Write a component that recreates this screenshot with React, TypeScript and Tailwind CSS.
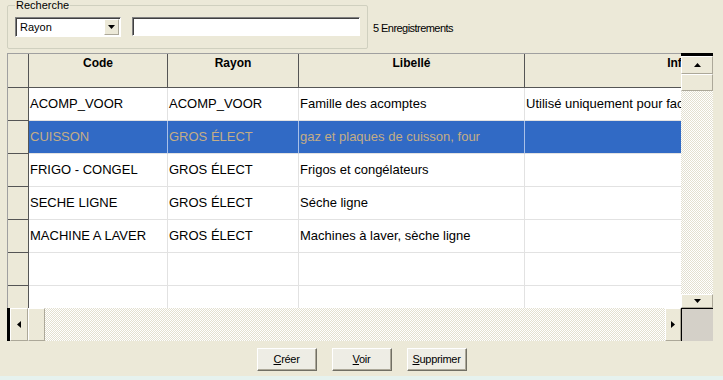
import React from 'react'

const rows = [
  { code: 'ACOMP_VOOR', rayon: 'ACOMP_VOOR', libelle: 'Famille des acomptes', info: 'Utilisé uniquement pour facturer les acomptes' },
  { code: 'CUISSON', rayon: 'GROS ÉLECT', libelle: 'gaz et plaques de cuisson, four', info: '', selected: true },
  { code: 'FRIGO - CONGEL', rayon: 'GROS ÉLECT', libelle: 'Frigos et congélateurs', info: '' },
  { code: 'SECHE LIGNE', rayon: 'GROS ÉLECT', libelle: 'Séche ligne', info: '' },
  { code: 'MACHINE A LAVER', rayon: 'GROS ÉLECT', libelle: 'Machines à laver, sèche ligne', info: '' },
  { code: '', rayon: '', libelle: '', info: '' },
  { code: '', rayon: '', libelle: '', info: '' },
]

const cols = [
  { label: 'Code', key: 'code', w: 'w-[139px]' },
  { label: 'Rayon', key: 'rayon', w: 'w-[131px]' },
  { label: 'Libellé', key: 'libelle', w: 'w-[226px]' },
  { label: 'Informations', key: 'info', w: 'w-[358px]' },
]

const hatch =
  'bg-[image:repeating-conic-gradient(#ffffff_0%_25%,#e3e0d0_0%_50%)] bg-[length:2px_2px]'

const Arrow = ({ dir }: { dir: 'up' | 'down' | 'left' | 'right' }) => {
  const pts = {
    up: '0,4 7,4 3.5,0',
    down: '0,0 7,0 3.5,4',
    left: '4,0 4,7 0,3.5',
    right: '0,0 0,7 4,3.5',
  }[dir]
  const horiz = dir === 'up' || dir === 'down'
  return (
    <svg width={horiz ? 7 : 4} height={horiz ? 4 : 7} viewBox={horiz ? '0 0 7 4' : '0 0 4 7'}>
      <polygon points={pts} fill="#000" />
    </svg>
  )
}

const raised =
  'bg-[#ece9d8] border border-t-white border-l-white border-r-[#aca899] border-b-[#aca899]'

const Btn = ({ first, rest }: { first: string; rest: string }) => (
  <button className="w-[60px] h-[23px] bg-[#eeede5] border border-t-white border-l-white border-r-[#716f64] border-b-[#716f64] shadow-[inset_-1px_-1px_#aca899] text-[11px] tracking-[-0.3px] text-black">
    <span className="underline">{first}</span>
    {rest}
  </button>
)

export default function App() {
  return (
    <div className="w-[723px] h-[380px] bg-[#ece9d8] flex flex-col overflow-hidden font-['Liberation_Sans',Arial,sans-serif] text-black">
      {/* recherche */}
      <div className="flex items-start">
        <fieldset className="ml-[7px] w-[361px] h-[49px] border border-[#d0d0bf] rounded-[2px] px-[7px]">
          <legend className="px-[1px] text-[11px] leading-[11px]">Recherche</legend>
          <div className="flex items-start mt-[6px] gap-[11px]">
            <div className="w-[106px] h-[20px] border border-t-[#808080] border-l-[#808080] border-b-white border-r-white shadow-[inset_1px_1px_#404040] bg-white flex items-center pl-[4px] pr-[1px]">
              <span className="text-[11px] flex-1">Rayon</span>
              <div className={`${raised} w-[15px] h-[16px] flex items-center justify-center`}>
                <Arrow dir="down" />
              </div>
            </div>
            <div className="w-[228px] h-[19px] border border-t-[#808080] border-l-[#808080] border-b-white border-r-white shadow-[inset_1px_1px_#404040] bg-white" />
          </div>
        </fieldset>
        <span className="ml-[5px] mt-[20px] text-[11px] tracking-[-0.55px]">5 Enregistrements</span>
      </div>

      {/* grille */}
      <div className="ml-[7px] mt-[4px] w-[706px] flex flex-col">
        <div className="flex h-[255px]">
          <div className="w-[674px] h-[255px] overflow-hidden border-t border-l border-[#a0a0a0] bg-white">
            {/* entête */}
            <div className="flex h-[34px] w-max bg-[#ece9d8] border-b border-[#555]">
              <div className="w-[21px] shrink-0 border-r border-[#555]" />
              {cols.map((c) => (
                <div
                  key={c.key}
                  className={`${c.w} shrink-0 border-r border-[#555] text-center font-bold text-[12px] leading-[14px] pt-[2px]`}
                >
                  {c.label}
                </div>
              ))}
            </div>
            {rows.map((r, i) => (
              <div key={i} className="flex h-[33px] w-max">
                <div className="w-[21px] shrink-0 bg-[#ece9d8] border-r border-b border-[#555]" />
                {cols.map((c) => (
                  <div
                    key={c.key}
                    className={`${c.w} shrink-0 flex items-center pl-[1px] text-[13px] whitespace-nowrap overflow-hidden border-b ${
                      r.selected
                        ? 'bg-[#316ac5] text-[#c4ad86] border-r border-r-[#a9c0e8] border-b-[#e2e2e2]'
                        : 'border-r border-[#e2e2e2]'
                    }`}
                  >
                    {(r as any)[c.key]}
                  </div>
                ))}
              </div>
            ))}
          </div>
          {/* barre verticale */}
          <div className="w-[32px] h-[255px] flex flex-col border-t-[3px] border-black">
            <div className={`${raised} h-[18px] flex items-center justify-center`}>
              <Arrow dir="up" />
            </div>
            <div className={`${raised} h-[17px]`} />
            <div className={`flex-1 ${hatch}`} />
            <div className={`${raised} h-[14px] flex items-center justify-center`}>
              <Arrow dir="down" />
            </div>
          </div>
        </div>
        {/* barre horizontale */}
        <div className="flex h-[33px]">
          <div className="w-[674px] flex border-l-[3px] border-black">
            <div className={`${raised} w-[18px] flex items-center justify-center`}>
              <Arrow dir="left" />
            </div>
            <div className={`${raised} w-[17px]`} />
            <div className={`flex-1 ${hatch}`} />
            <div className={`${raised} w-[16px] flex items-center justify-center`}>
              <Arrow dir="right" />
            </div>
          </div>
          <div className="w-[32px] bg-[#d4d0c8] border-l border-t border-black" />
        </div>
      </div>

      {/* boutons */}
      <div className="flex justify-center gap-[15px] mt-[7px]">
        <Btn first="C" rest="réer" />
        <Btn first="V" rest="oir" />
        <Btn first="S" rest="upprimer" />
      </div>

      <div className="mt-auto h-[4px] bg-[#e6f2ee]" />
    </div>
  )
}
